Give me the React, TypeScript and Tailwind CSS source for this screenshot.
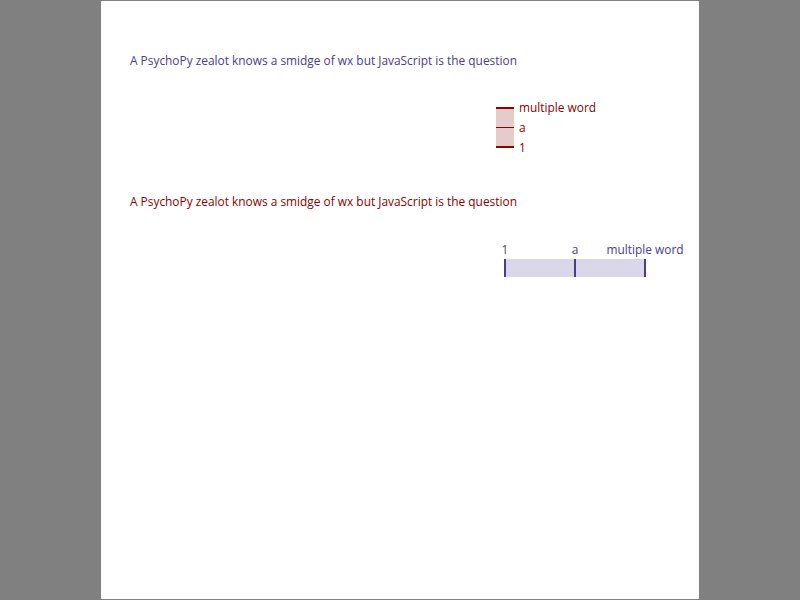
export default function App() {
    const font = { fontFamily: '"Open Sans", "Noto Sans", sans-serif' };

    return (
        <div className="flex h-[600px] w-[800px] justify-center bg-[#808080] pt-px" style={font}>
            <div className="flex h-[598px] w-[598px] flex-col items-start bg-white pl-[29px] pt-[50px] text-[11.9px] leading-[18px]">
                <p className="text-[#483d8b]">
                    A PsychoPy zealot knows a smidge of wx but JavaScript is the question
                </p>

                {/* vertical slider */}
                <div className="ml-[366px] mt-[38px] flex gap-[5px]">
                    <div className="flex h-[41px] w-[18px] flex-col justify-between bg-[#e6cbcb]">
                        <div className="h-[2px] bg-[#8b0000]" />
                        <div className="h-px bg-[#8b0000]" />
                        <div className="h-[2px] bg-[#8b0000]" />
                    </div>
                    <div className="flex h-[40px] flex-col justify-between text-[#8b0000]">
                        <div className="flex h-0 items-center">multiple word</div>
                        <div className="flex h-0 items-center">a</div>
                        <div className="flex h-0 items-center">1</div>
                    </div>
                </div>

                <p className="mt-[44px] text-[#8b0000]">
                    A PsychoPy zealot knows a smidge of wx but JavaScript is the question
                </p>

                {/* horizontal slider */}
                <div className="ml-[374px] mt-[30px] flex w-[142px] flex-col gap-[1px] text-[#483d8b]">
                    <div className="flex h-[18px] justify-between px-px">
                        <div className="flex w-0 justify-center">1</div>
                        <div className="flex w-0 justify-center">a</div>
                        <div className="flex w-0 justify-center whitespace-nowrap">multiple word</div>
                    </div>
                    <div className="flex h-[18px] justify-between bg-[#d9d7e8]">
                        <div className="w-[2px] bg-[#483d8b]" />
                        <div className="w-[2px] bg-[#483d8b]" />
                        <div className="w-[2px] bg-[#483d8b]" />
                    </div>
                </div>
            </div>
        </div>
    );
}
